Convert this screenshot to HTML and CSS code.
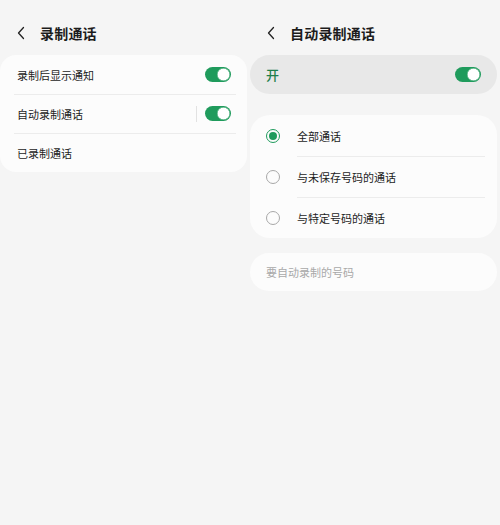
FILE: index.html
```html
<!DOCTYPE html>
<html lang="zh-CN">
<head>
    <meta charset="UTF-8">
    <meta name="viewport" content="width=device-width, initial-scale=1.0">
    <title>录制通话</title>
    <link rel="stylesheet" href="styles.css">
</head>
<body>
    <div class="screens">
        <!-- 录制通话 -->
        <section class="screen">
            <header class="top-bar">
                <svg class="back" viewBox="0 0 10 14" width="10" height="14">
                    <path d="M7.5 1.5 L2.5 7 L7.5 12.5" fill="none" stroke="#222" stroke-width="1.3" stroke-linecap="round" stroke-linejoin="round"/>
                </svg>
                <h1>录制通话</h1>
            </header>
            <div class="card">
                <div class="row">
                    <span>录制后显示通知</span>
                    <span class="switch on"></span>
                </div>
                <div class="row">
                    <span>自动录制通话</span>
                    <span class="row-end"><i class="v-line"></i><span class="switch on"></span></span>
                </div>
                <div class="row">
                    <span>已录制通话</span>
                </div>
            </div>
        </section>

        <!-- 自动录制通话 -->
        <section class="screen">
            <header class="top-bar">
                <svg class="back" viewBox="0 0 10 14" width="10" height="14">
                    <path d="M7.5 1.5 L2.5 7 L7.5 12.5" fill="none" stroke="#222" stroke-width="1.3" stroke-linecap="round" stroke-linejoin="round"/>
                </svg>
                <h1>自动录制通话</h1>
            </header>
            <div class="master">
                <span class="master-label">开</span>
                <span class="switch on"></span>
            </div>
            <div class="card radio-card">
                <div class="radio-row">
                    <span class="radio checked"></span>
                    <span class="radio-text">全部通话</span>
                </div>
                <div class="radio-row">
                    <span class="radio"></span>
                    <span class="radio-text">与未保存号码的通话</span>
                </div>
                <div class="radio-row">
                    <span class="radio"></span>
                    <span class="radio-text">与特定号码的通话</span>
                </div>
            </div>
            <div class="card input-card">
                <span class="placeholder">要自动录制的号码</span>
            </div>
        </section>
    </div>
</body>
</html>
```

FILE: styles.css
```css
* {
    margin: 0;
    padding: 0;
    box-sizing: border-box;
}

body {
    font-family: 'Noto Sans CJK SC', 'Noto Sans', sans-serif;
    background: #f5f5f5;
    color: #1c1c1c;
    width: 500px;
    height: 525px;
    overflow: hidden;
}

.screens {
    display: grid;
    grid-template-columns: 250px 250px;
}

.screen {
    padding-right: 3px;
}

/* 顶部标题 */
.top-bar {
    height: 55px;
    display: flex;
    align-items: center;
    padding: 11px 0 0 16px;
}

.back {
    margin-right: 14px;
}

.top-bar h1 {
    font-size: 14px;
    font-weight: 600;
    letter-spacing: 0.2px;
}

/* 卡片 */
.card {
    background: #fcfcfc;
    border-radius: 16px;
}

.row {
    height: 39px;
    display: flex;
    align-items: center;
    justify-content: space-between;
    padding: 0 16px 0 17px;
    font-size: 11px;
    position: relative;
}

.row + .row::before {
    content: '';
    position: absolute;
    top: 0;
    left: 14px;
    right: 11px;
    height: 1px;
    background: #ececec;
}

.row-end {
    display: flex;
    align-items: center;
}

.v-line {
    width: 1px;
    height: 16px;
    background: #e2e2e2;
    margin-right: 8px;
}

/* 开关 */
.switch {
    width: 26px;
    height: 15px;
    border-radius: 8px;
    background: #1f9b5c;
    position: relative;
    flex-shrink: 0;
}

.switch::after {
    content: '';
    position: absolute;
    top: 1px;
    right: 1px;
    width: 13px;
    height: 13px;
    border-radius: 50%;
    background: #fff;
    box-shadow: 0 0 0 0.5px #1f9b5c inset;
}

/* 主开关 */
.master {
    height: 39px;
    border-radius: 20px;
    background: #e8e8e8;
    display: flex;
    align-items: center;
    justify-content: space-between;
    padding: 0 16px 0 16px;
    margin-bottom: 21px;
}

.master-label {
    font-size: 13px;
    color: #1e7f4c;
    font-weight: 500;
}

/* 单选 */
.radio-card {
    border-radius: 20px;
}

.radio-row {
    height: 41px;
    display: flex;
    align-items: center;
    padding-left: 16px;
    font-size: 11px;
}

.radio {
    width: 14px;
    height: 14px;
    border-radius: 50%;
    border: 1px solid #a8a8a8;
    margin-right: 17px;
    flex-shrink: 0;
    position: relative;
}

.radio.checked {
    border-color: #1f9b5c;
}

.radio.checked::after {
    content: '';
    position: absolute;
    top: 2px;
    left: 2px;
    width: 8px;
    height: 8px;
    border-radius: 50%;
    background: #1f9b5c;
}

.radio-text {
    flex: 1;
    height: 100%;
    display: flex;
    align-items: center;
    margin-right: 12px;
}

.radio-row + .radio-row .radio-text {
    border-top: 1px solid #ececec;
}

/* 号码输入 */
.input-card {
    margin-top: 15px;
    height: 38px;
    border-radius: 19px;
    display: flex;
    align-items: center;
    padding-left: 16px;
}

.placeholder {
    font-size: 11px;
    color: #a9a9a9;
}
```
